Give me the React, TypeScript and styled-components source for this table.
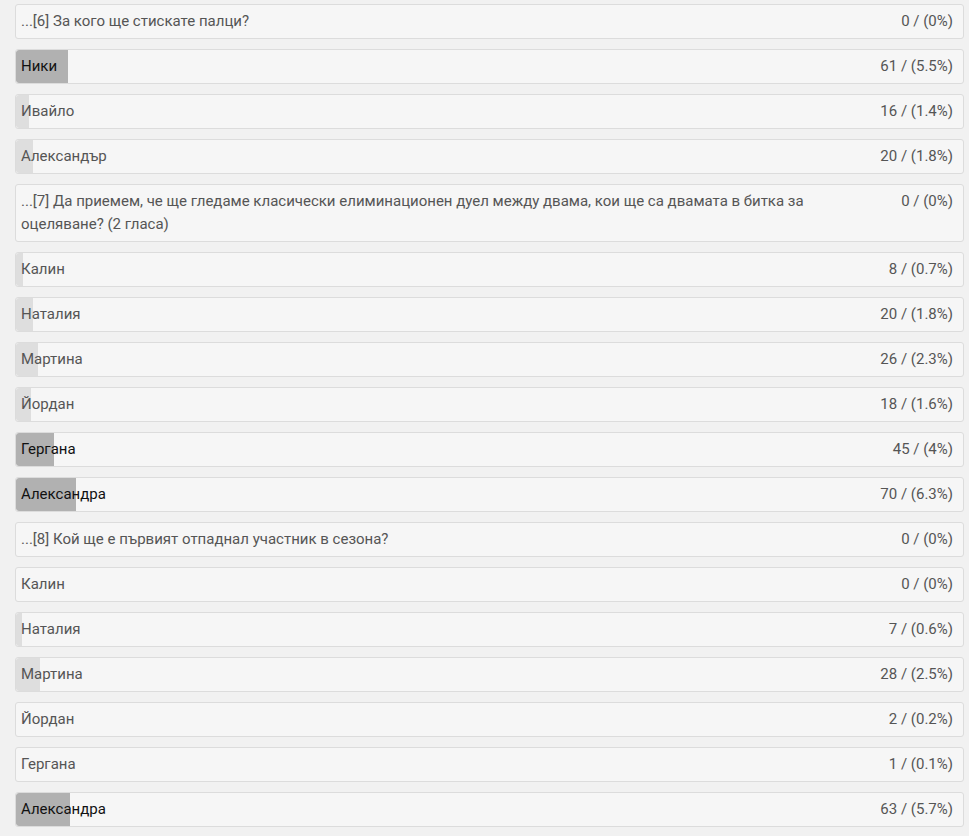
import React, { FC } from 'react';
import styled, { createGlobalStyle } from 'styled-components';

const GlobalStyle = createGlobalStyle`
  html, body {
    margin: 0;
    padding: 0;
    background: #f1f1f1;
  }
  body {
    font-family: Roboto, "Liberation Sans", Arial, sans-serif;
  }
`;

const List = styled.section`
  display: flex;
  flex-direction: column;
  gap: 10px;
  padding: 4px 5px 8px 15px;
`;

const Row = styled.article<{ strong?: boolean }>`
  position: relative;
  display: flex;
  align-items: flex-start;
  justify-content: space-between;
  gap: 40px;
  padding: 5px 10px 5px 5px;
  border: 1px solid #dcdcdc;
  border-radius: 3px;
  background: #f6f6f6;
  font-size: 15px;
  line-height: 23px;
  color: ${({ strong }) => (strong ? '#111' : '#555')};
  overflow: hidden;
`;

// the fill behind a row, its width is the vote share
const Bar = styled.div<{ dark?: boolean }>`
  position: absolute;
  top: 0;
  left: 0;
  bottom: 0;
  border-radius: 3px 0 0 3px;
  background: ${({ dark }) => (dark ? '#b1b1b1' : '#dedede')};
`;

const Label = styled.span`
  position: relative;
`;

const Count = styled.span`
  position: relative;
  white-space: nowrap;
  color: #555;
`;

type Item = { label: string, votes: number, pct: number, question?: boolean };

const items: Item[] = [
  { label: '...[6] За кого ще стискате палци?', votes: 0, pct: 0, question: true },
  { label: 'Ники', votes: 61, pct: 5.5 },
  { label: 'Ивайло', votes: 16, pct: 1.4 },
  { label: 'Александър', votes: 20, pct: 1.8 },
  {
    label: '...[7] Да приемем, че ще гледаме класически елиминационен дуел между двама, кои ще са двамата в битка за оцеляване? (2 гласа)',
    votes: 0,
    pct: 0,
    question: true,
  },
  { label: 'Калин', votes: 8, pct: 0.7 },
  { label: 'Наталия', votes: 20, pct: 1.8 },
  { label: 'Мартина', votes: 26, pct: 2.3 },
  { label: 'Йордан', votes: 18, pct: 1.6 },
  { label: 'Гергана', votes: 45, pct: 4 },
  { label: 'Александра', votes: 70, pct: 6.3 },
  { label: '...[8] Кой ще е първият отпаднал участник в сезона?', votes: 0, pct: 0, question: true },
  { label: 'Калин', votes: 0, pct: 0 },
  { label: 'Наталия', votes: 7, pct: 0.6 },
  { label: 'Мартина', votes: 28, pct: 2.5 },
  { label: 'Йордан', votes: 2, pct: 0.2 },
  { label: 'Гергана', votes: 1, pct: 0.1 },
  { label: 'Александра', votes: 63, pct: 5.7 },
];

const PollRow: FC<{ item: Item }> = ({ item }) => {
  const dark = item.pct >= 3;
  return (
    <Row strong={dark}>
      {!item.question && item.pct >= 0.5
        ? <Bar dark={dark} style={{ width: `${item.pct}%` }} />
        : undefined}
      <Label>{item.label}</Label>
      <Count>{`${item.votes} / (${item.pct}%)`}</Count>
    </Row>
  );
};

const App: FC = () => (
  <>
    <GlobalStyle />
    <List>
      {items.map((item, idx) => <PollRow key={idx} item={item} />)}
    </List>
  </>
);

export default App;
